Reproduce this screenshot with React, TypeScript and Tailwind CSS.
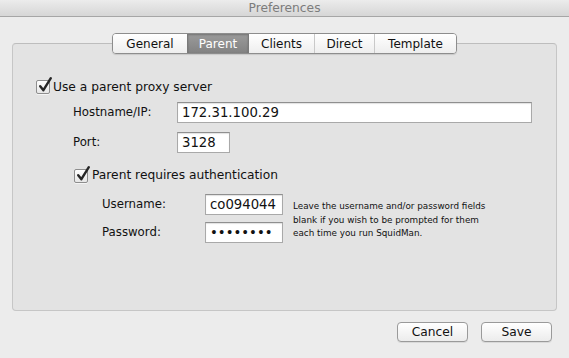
import React from "react";

const font = { fontFamily: '"DejaVu Sans", "Liberation Sans", sans-serif' };

function Check() {
  return (
    <div className="relative h-[14px] w-[14px] shrink-0 rounded-[2px] border border-[#8e8e8e] bg-gradient-to-b from-[#ffffff] to-[#e6e6e6] shadow-[0_1px_0_rgba(255,255,255,0.6)]">
      <svg className="absolute left-[1px] top-[-4px] overflow-visible" width="15" height="16" viewBox="0 0 15 16">
        <path d="M2.2 9.2 L5.4 13.2 L12.8 1.2" fill="none" stroke="#262626" strokeWidth="2.4" strokeLinecap="round" strokeLinejoin="round" />
      </svg>
    </div>
  );
}

function Input({ w, value }: { w: string; value: string }) {
  return (
    <div className={`${w} flex h-[21px] items-center border border-[#a9a9a9] border-t-[#8f8f8f] bg-white pl-[4px] shadow-[inset_0_1px_1px_rgba(0,0,0,0.12)]`}>
      <span className="text-[13.25px] leading-none text-[#111]">{value}</span>
    </div>
  );
}

const tabs = [
  { label: "General", w: "w-[74px]" },
  { label: "Parent", w: "w-[61px]", sel: true },
  { label: "Clients", w: "w-[66px]" },
  { label: "Direct", w: "w-[60px]" },
  { label: "Template", w: "w-[82px]" },
];

export default function App() {
  return (
    <div className="flex h-[358px] w-[569px] flex-col bg-[#ececec] text-[#111]" style={font}>
      <div className="flex h-[17px] shrink-0 items-center justify-center border-b border-[#a6a6a6] bg-gradient-to-b from-[#ececec] to-[#d6d6d6]">
        <span className="text-[12.25px] leading-none text-[#7c7c7c]">Preferences</span>
      </div>

      <div className="relative z-10 mt-[16px] flex justify-center">
        <div className="flex h-[21px] overflow-hidden rounded-[4px] border border-[#8d8d8d] shadow-[0_1px_1px_rgba(0,0,0,0.12)]">
          {tabs.map((t, i) => (
            <div
              key={t.label}
              className={`${t.w} flex items-center justify-center text-[12px] leading-none ${
                i > 0 ? (t.sel || tabs[i - 1].sel ? "border-l border-[#7a7a7a]" : "border-l border-[#c9c9c9]") : ""
              } ${t.sel ? "bg-gradient-to-b from-[#9b9b9b] to-[#828282] text-white shadow-[inset_0_1px_2px_rgba(0,0,0,0.25)]" : "bg-gradient-to-b from-[#ffffff] to-[#eeeeee] text-[#111]"}`}
            >
              {t.label}
            </div>
          ))}
        </div>
      </div>

      <div className="mx-[12px] -mt-[11px] h-[268px] shrink-0 rounded-[4px] border border-[#c6c6c6] border-t-[#bdbdbd] bg-[#e3e3e3] pt-[36px]">
        <div className="ml-[23px] flex h-[14px] items-center gap-[3px]">
          <Check />
          <span className="text-[12.25px] leading-none">Use a parent proxy server</span>
        </div>

        <div className="mt-[8px] flex h-[21px] items-center">
          <span className="ml-[60px] w-[104px] text-[11.75px] leading-none">Hostname/IP:</span>
          <Input w="w-[355px]" value="172.31.100.29" />
        </div>

        <div className="mt-[9px] flex h-[21px] items-center">
          <span className="ml-[60px] w-[104px] text-[11.75px] leading-none">Port:</span>
          <Input w="w-[53px]" value="3128" />
        </div>

        <div className="ml-[61px] mt-[15px] flex h-[15px] items-center gap-[4px]">
          <Check />
          <span className="text-[12.25px] leading-none">Parent requires authentication</span>
        </div>

        <div className="mt-[11px] flex">
          <div className="flex flex-col">
            <div className="flex h-[21px] items-center">
              <span className="ml-[89px] w-[103px] text-[11.75px] leading-none">Username:</span>
              <Input w="w-[78px]" value="co094044" />
            </div>
            <div className="mt-[7px] flex h-[21px] items-center">
              <span className="ml-[89px] w-[103px] text-[11.75px] leading-none">Password:</span>
              <Input w="w-[78px]" value="••••••••" />
            </div>
          </div>
          <div className="ml-[10px] mt-[6px] whitespace-nowrap text-[8.8px] leading-[13.5px]">
            Leave the username and/or password fields
            <br />
            blank if you wish to be prompted for them
            <br />
            each time you run SquidMan.
          </div>
        </div>
      </div>

      <div className="mt-[11px] flex justify-end gap-[13px] pr-[17px]">
        {["Cancel", "Save"].map((b) => (
          <div
            key={b}
            className="flex h-[20px] w-[71px] items-center justify-center rounded-[4px] border border-[#9a9a9a] bg-gradient-to-b from-[#ffffff] to-[#ececec] text-[12.25px] leading-none shadow-[0_1px_0_rgba(0,0,0,0.08)]"
          >
            {b}
          </div>
        ))}
      </div>
    </div>
  );
}
